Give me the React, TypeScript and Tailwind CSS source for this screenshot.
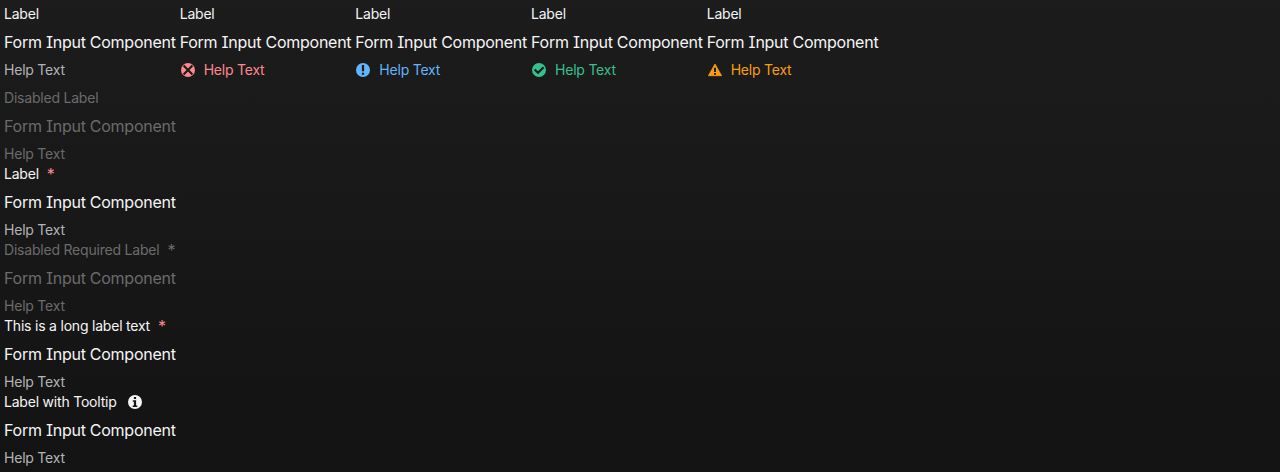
import React from "react";

type Kind = "error" | "info" | "success" | "warning";

const kinds: Record<Kind, { color: string; icon: React.ReactNode }> = {
  error: {
    color: "text-[#ff878f]",
    icon: (
      <>
        <circle cx="8" cy="8" r="7" fill="currentColor" />
        <path d="M3.6 3.6 12.4 12.4M12.4 3.6 3.6 12.4" stroke="#1b1b1b" strokeWidth="2.1" />
      </>
    ),
  },
  info: {
    color: "text-[#64b4fa]",
    icon: (
      <>
        <circle cx="8" cy="8" r="7" fill="currentColor" />
        <path d="M6.9 3h2.2v6.3H6.9zM6.9 10.7h2.2v2H6.9z" fill="#1b1b1b" />
      </>
    ),
  },
  success: {
    color: "text-[#36c08f]",
    icon: (
      <>
        <circle cx="8" cy="8" r="7" fill="currentColor" />
        <path d="M3.6 7.4 7 10.8 12.6 5.2" stroke="#1b1b1b" strokeWidth="2.1" fill="none" />
      </>
    ),
  },
  warning: {
    color: "text-[#f99d11]",
    icon: (
      <>
        <path d="M8 2 14.6 13.7H1.4z" fill="currentColor" stroke="currentColor" strokeWidth="0.8" strokeLinejoin="round" />
        <path d="M7 5.8h2v4.1H7zM7 11h2v1.7H7z" fill="#1b1b1b" />
      </>
    ),
  },
};

function Icon({ children }: { children: React.ReactNode }) {
  return (
    <svg className="size-4 shrink-0" viewBox="0 0 16 16" fill="none">
      {children}
    </svg>
  );
}

interface FieldProps {
  label: string;
  kind?: Kind;
  disabled?: boolean;
  required?: boolean;
  tooltip?: boolean;
}

function Field({ label, kind, disabled, required, tooltip }: FieldProps) {
  const help = kind ? kinds[kind].color : disabled ? "text-[#6b6b6b]" : "text-[#b3b3b3]";
  return (
    <div className={disabled ? "text-[#6b6b6b]" : "text-[#f5f5f5]"}>
      <div className="flex h-5 items-center text-sm leading-5 tracking-[-0.21px]">
        <span>{label}</span>
        {required && (
          <span className={disabled ? "ml-2 text-base leading-5" : "ml-2 text-base leading-5 text-[#ff878f]"}>*</span>
        )}
        {tooltip && (
          <span className="ml-2.5">
            <Icon>
              <circle cx="8" cy="8" r="7" fill="currentColor" />
              <path d="M6.9 3h2.2v2.1H6.9zM5.8 6.2h3.3v5.2h1.2V13H5.7v-1.6h1.2V7.8H5.8z" fill="#151515" />
            </Icon>
          </span>
        )}
      </div>
      <div className="my-1.5 h-6 text-base leading-6 tracking-[-0.259px]">Form Input Component</div>
      <div className={`flex h-5 items-center gap-2 text-sm leading-5 tracking-[-0.22px] ${help}`}>
        {kind && <Icon>{kinds[kind].icon}</Icon>}
        <span>Help Text</span>
      </div>
    </div>
  );
}

export default function App() {
  return (
    <div className="h-[472px] overflow-hidden bg-linear-to-b from-[#1c1c1c] to-[#131313] px-1 pt-1 font-['Inter',sans-serif] [font-feature-settings:'cv08']">
      <div className="mb-2 flex gap-1">
        <Field label="Label" />
        <Field label="Label" kind="error" />
        <Field label="Label" kind="info" />
        <Field label="Label" kind="success" />
        <Field label="Label" kind="warning" />
      </div>
      <Field label="Disabled Label" disabled />
      <Field label="Label" required />
      <Field label="Disabled Required Label" disabled required />
      <Field label="This is a long label text" required />
      <Field label="Label with Tooltip" tooltip />
    </div>
  );
}
